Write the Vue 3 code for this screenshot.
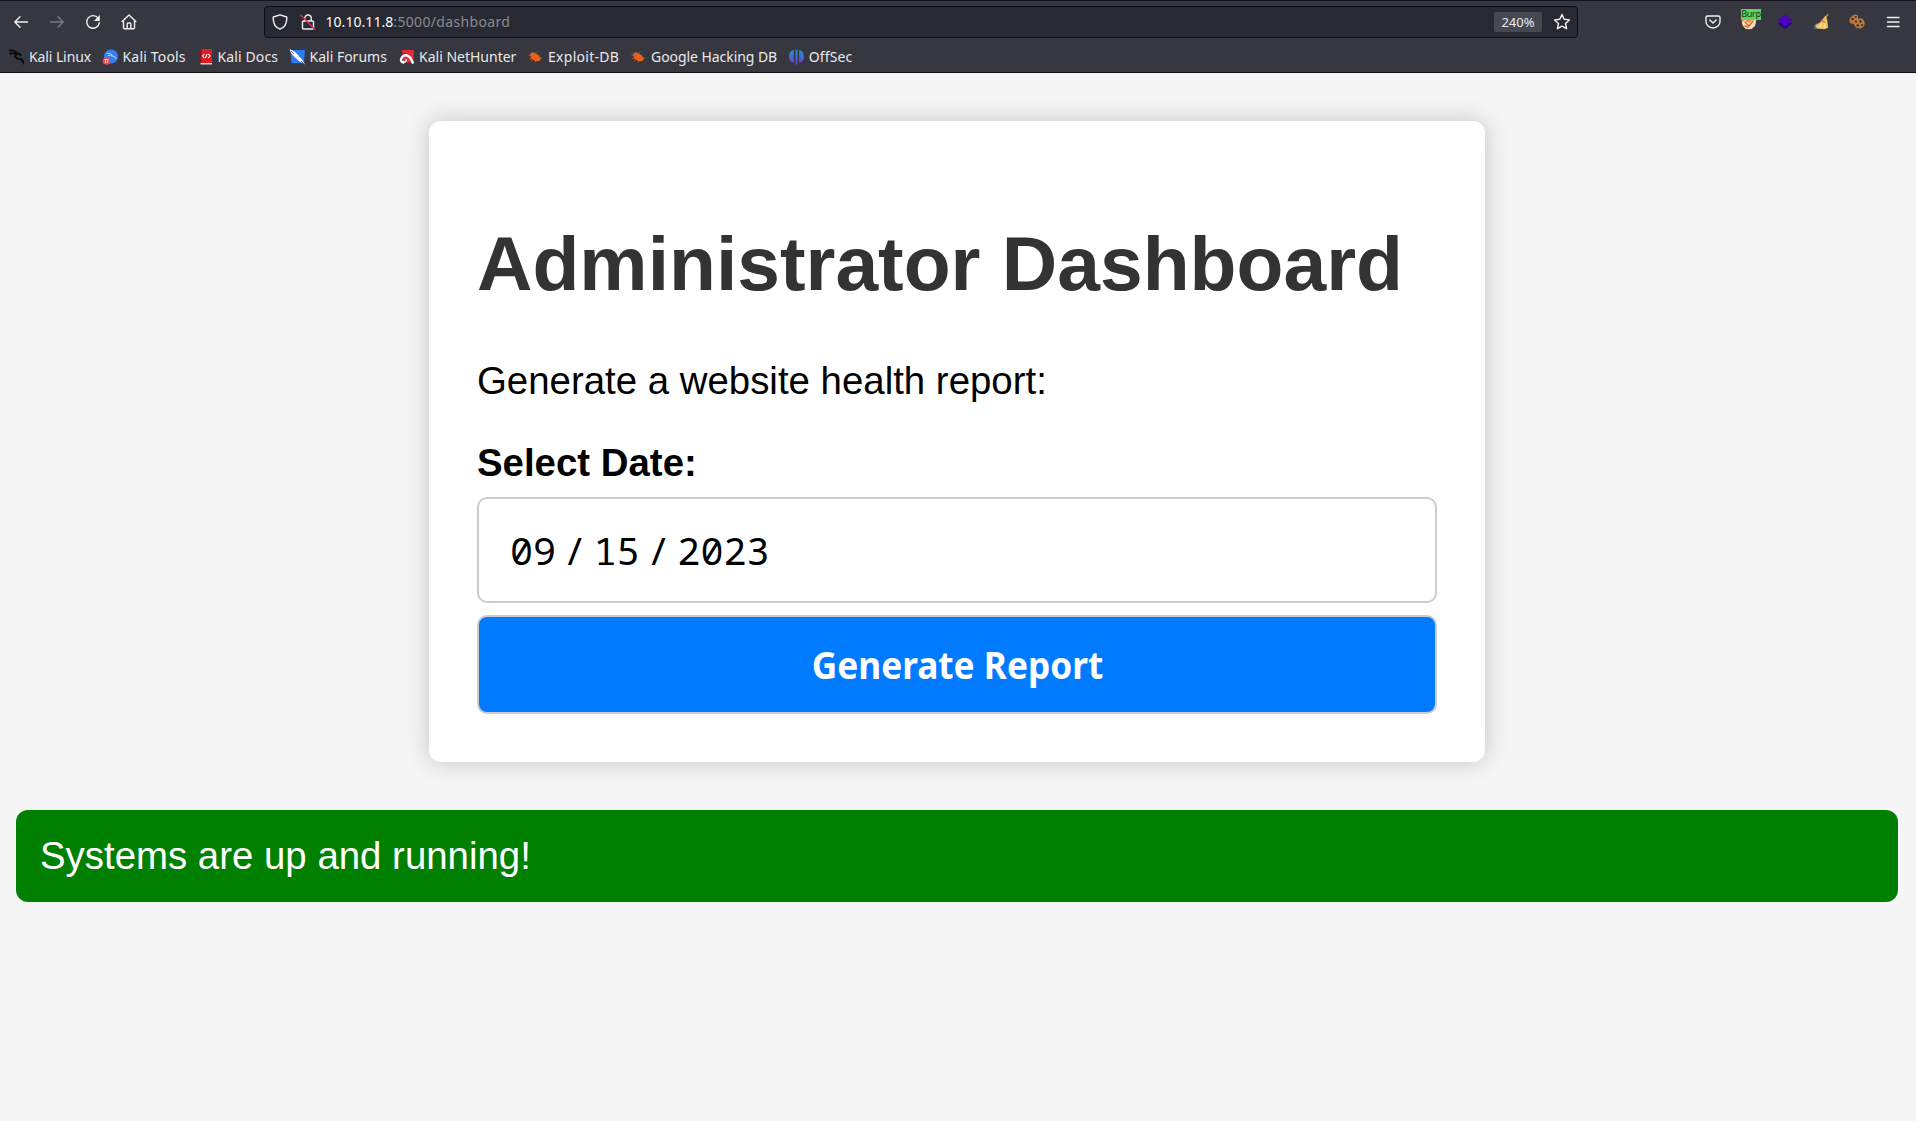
<script setup>
import { ref } from 'vue'

const bookmarks = [
  { label: 'Kali Linux', icon: 'linux', width: 93.5, spacing: -0.1 },
  { label: 'Kali Tools', icon: 'tools', width: 95, spacing: 0.18 },
  { label: 'Kali Docs', icon: 'docs', width: 92, spacing: 0.12 },
  { label: 'Kali Forums', icon: 'forums', width: 109.5, spacing: 0 },
  { label: 'Kali NetHunter', icon: 'nethunter', width: 129, spacing: 0 },
  { label: 'Exploit-DB', icon: 'bug', width: 103, spacing: 0.28 },
  { label: 'Google Hacking DB', icon: 'bug', width: 157.8, spacing: -0.06 },
  { label: 'OffSec', icon: 'offsec', width: 80, spacing: 0.12 },
]
const date = ref({ month: '09', day: '15', year: '2023' })
const status = ref('Systems are up and running!')
</script>

<template>
  <div class="browser">
    <header class="chrome">
      <div class="toolbar">
        <nav class="buttons">
          <button class="tool"><svg width="16" height="16" viewBox="0 0 16 16"><path d="M14.500 8H1.800M7 2.800L1.800 8l5.200 5.200" /></svg></button>
          <button class="tool dim"><svg width="16" height="16" viewBox="0 0 16 16"><path d="M1.500 8h12.700M9 2.800L14.200 8 9 13.200" /></svg></button>
          <button class="tool"><svg width="16" height="16" viewBox="0 0 16 16"><path d="M13 4A6.300 6.300 0 1 0 14.300 8.800" /><path class="solid" d="M14.800 1v6H9z" /></svg></button>
          <button class="tool"><svg width="16" height="16" viewBox="0 0 16 16"><path d="M1.200 7.500L8 1l6.800 6.500M2.500 6.500v7.300q0 1 1 1h9q1 0 1-1V6.500M6.200 14.500V10q0-1 1-1h1.600q1 0 1 1v4.500" /></svg></button>
        </nav>

        <div class="urlbar">
          <svg class="shield" width="16" height="16" viewBox="0 0 16 16"><path d="M8 .8L14.700 3c.5 5.500-1.300 10-6.700 12.200C2.600 13 .8 8.500 1.300 3z" /></svg>
          <svg class="lock" width="16" height="16" viewBox="0 0 16 16"><path d="M4.800 7V4.200a3.200 3.200 0 0 1 6.400 0V7M3.500 7h9q1 0 1 1v6q0 1-1 1h-9q-1 0-1-1V8q0-1 1-1z" /><path class="slash" d="M.8 1.200L15 15.500" /></svg>
          <span class="url"><span class="host">10.10.11.8</span><span class="path">:5000/dashboard</span></span>
          <span class="zoom">240%</span>
          <svg class="star" width="18" height="18" viewBox="0 0 18 18"><path d="M9 1.500l2.200 4.800 5.200.6-3.900 3.600 1.100 5.200L9 13.100l-4.600 2.600 1.100-5.200L1.600 6.900l5.200-.6z" /></svg>
        </div>

        <nav class="buttons extensions">
          <button class="tool"><svg width="16" height="16" viewBox="0 0 16 16"><path d="M2.500 2h11q1.500 0 1.500 1.500V7.500a7 6.500 0 0 1-14 0v-4Q1 2 2.500 2zM4.800 6L8 9l3.200-3" /></svg></button>
          <button class="tool burp">
            <svg width="18" height="18" viewBox="0 0 18 18"><path fill="#e98b3c" stroke="none" d="M1.500 5h15l-1 6-3 4.500-3.500 1-4-1.500L2 11z" /><path fill="#f4dfc8" stroke="none" d="M2 9l3-2 4 3 4-4 3 1-1 6-4 3-5 0-3-3z" /><path stroke="#d96c1c" stroke-width="1.500" d="M5 9l4 4 4-5M5 13l3 1" /></svg>
            <span class="badge">Burp</span>
          </button>
          <button class="tool"><svg width="16" height="16" viewBox="0 0 16 16"><path fill="#2d087c" stroke="none" d="M.5 9.500L8 5l7.500 4.500L8 15.500z" /><path fill="#4a04bb" stroke="none" d="M.5 6.500L8 .5l7.500 6L8 12.500z" /></svg></button>
          <button class="tool"><svg width="16" height="16" viewBox="0 0 16 16"><path fill="#637078" stroke="none" d="M4 9Q0 11 1.500 15h8L6 12z" /><path stroke="#c59129" d="M14.800.5L12.500 4" /><path fill="#f3c566" stroke="none" d="M12.500 1.500l1.800 5 .7 7.500-4 1.300-7-1-1.500-2.800L7.500 8z" /><path stroke="#e76d55" d="M8.500 6.500l3 1.500" /><path stroke="#fae29a" d="M8 10.500l-1 2M11.500 10.500v2" /></svg></button>
          <button class="tool"><svg width="16" height="16" viewBox="0 0 16 16"><path fill="#b87942" stroke="none" d="M3.500 1.500q3-2 5.500 0v3.500q3-1.500 5 .5 2.500 2.500 1.500 5-1 3.500-4.500 4-3 .5-5-2-1.500-2-1-3-4 1-4.500-1.500-.8-4 3-6.500z" /><g fill="#382c2b" stroke="none"><circle cx="3.600" cy="5" r="1.200" /><circle cx="6.800" cy="3" r=".9" /><circle cx="7" cy="7.500" r="1.100" /><circle cx="11.500" cy="7.500" r="1.200" /><circle cx="8.800" cy="11.500" r="1.200" /><circle cx="13" cy="11" r="1" /></g></svg></button>
          <button class="tool"><svg width="16" height="16" viewBox="0 0 16 16"><path d="M2.500 3.500h11.500M2.500 8h11.500M2.500 12.500h11.500" /></svg></button>
        </nav>
      </div>

      <div class="bookmarks">
        <a v-for="b in bookmarks" :key="b.label" class="bookmark" :style="{ width: b.width + 'px', letterSpacing: b.spacing + 'px' }">
          <svg width="16" height="16" viewBox="0 0 16 16">
            <g v-if="b.icon === 'linux'" fill="none" stroke="#08090b">
              <path stroke-width="1.600" d="M1 1.500q6-1 8.500 3.500M1.500 5q5-2 8 .5" />
              <path stroke-width="2.200" d="M7 4q4 0 6.500 2.500M8 5q-2 4 2 4.500 4 0 5.200 4" />
              <path d="M14.500 11l1.200 4.500M3.500 2.500L1.500 4" />
            </g>
            <g v-else-if="b.icon === 'tools'">
              <circle cx="9" cy="7.500" r="7" fill="#327ff2" />
              <path fill="none" stroke="#b9d6ff" stroke-width="1" d="M4.500 4.500q5-1 6 2.500 3 0 3.500 3M6 6.500q3-1 4.500 1" />
              <circle cx="4.500" cy="12" r="3.800" fill="#e74848" />
              <path stroke="#fff" stroke-width=".8" d="M2.500 10.500h4M3.500 10.500v3.500M5.500 10.500v3.500" />
            </g>
            <g v-else-if="b.icon === 'docs'">
              <path fill="#dc1e20" d="M3 0h12v14H3z" />
              <path fill="#920f2e" d="M3 0h1.500v14H3z" />
              <path fill="#d7d5d5" d="M3.500 14H15v1.500H3.500z" />
              <path fill="none" stroke="#fff" stroke-width="1.100" d="M7.300 5L5.500 7l1.800 2M11.200 5L13 7l-1.800 2M10 5L8.500 9" />
            </g>
            <g v-else-if="b.icon === 'forums'">
              <path fill="#297cf1" d="M1.500 1H16l-1 13H2.500z" />
              <path fill="#fff" d="M.5 0l5 2.500 4 4 3.500 4 3 5-6-3.500L6 8.500 2 4z" />
              <path stroke="#263047" stroke-width=".7" d="M2 2l3 3M12 12l3 3" />
            </g>
            <g v-else-if="b.icon === 'nethunter'" transform="translate(1 0) scale(.94 1)">
              <path fill="#e52c3d" d="M3 1h13l-1 12.500H5z" />
              <path fill="none" stroke="#fff" stroke-width="2.500" d="M5.500 13.500Q1 13 2.500 9.500 4.500 5.500 8.500 6.500q4 1 6.500 8" />
              <path fill="none" stroke="#fff" stroke-width="1.500" d="M4.500 13.500q4-.5 3-3.500" />
              <path fill="none" stroke="#2b2b32" stroke-width=".8" d="M3 5q2-1 4-.5" />
            </g>
            <g v-else-if="b.icon === 'bug'">
              <path fill="#ed6319" d="M3 4.500l3.500-1L11 6l3 3.500-1.500 2.500-4 .3L4 9z" />
              <path stroke="#d95c1d" stroke-width=".8" fill="none" d="M1.500 6l5 1M2.500 9.500h6M5 2.500l2 3M9 3v3M12 5.500l-2 3M4 12l5-3M8 13.500l2-3M15 9h-4" />
            </g>
            <g v-else>
              <defs><linearGradient id="offsec-fill" gradientUnits="userSpaceOnUse" x1="0" y1="0" x2="0" y2="16"><stop stop-color="#169bc1" /><stop offset="1" stop-color="#7138eb" /></linearGradient></defs>
              <path fill="url(#offsec-fill)" d="M5.800 .8v13Q1 12.500 1 7.800 1 2 5.800 .8zM7.500 .4h2v15.200h-2zM11.200.8Q16 2.300 16 7.800q0 4.700-4.800 6z" />
            </g>
          </svg>
          <span>{{ b.label }}</span>
        </a>
      </div>
    </header>

    <main class="page">
      <section class="card">
        <h1>Administrator Dashboard</h1>
        <p>Generate a website health report:</p>
        <label>Select Date:</label>
        <div class="date">
          <span>{{ date.month }}</span><span class="sep">/</span><span>{{ date.day }}</span><span class="sep">/</span><span>{{ date.year }}</span>
        </div>
        <button class="submit"><span>Generate Report</span></button>
      </section>
      <div class="status">{{ status }}</div>
    </main>
  </div>
</template>

<style>
body {
  margin: 0;
  background: #f5f5f5;
}
</style>

<style scoped>
.browser {
  width: 100%;
  height: 1121px;
  overflow: hidden;
  background: #f5f5f5;
}
.chrome {
  box-sizing: border-box;
  height: 73px;
  background: #373740;
  border-top: 1px solid #15131f;
  border-bottom: 1px solid #101015;
  color: #e9e9ea;
  font: 14px/20px "Noto Sans", sans-serif;
}
.toolbar {
  box-sizing: border-box;
  display: flex;
  align-items: center;
  height: 41px;
  padding: 0 5px 0 3px;
}
.buttons {
  display: flex;
  width: 261px;
}
.extensions {
  width: 216px;
  margin-left: auto;
}
.tool {
  position: relative;
  display: flex;
  align-items: center;
  justify-content: center;
  width: 36px;
  height: 34px;
  padding: 0;
  border: 0;
  background: none;
}
.chrome svg {
  flex: none;
}
.toolbar svg {
  fill: none;
  stroke: #f0f0f2;
  stroke-width: 1.4;
  stroke-linejoin: round;
  stroke-linecap: round;
}
.toolbar .dim svg {
  stroke: #7b7b82;
}
.toolbar .solid {
  fill: #f0f0f2;
  stroke: none;
}
.toolbar .slash {
  stroke: #e22850;
}
.badge {
  position: absolute;
  left: 10px;
  top: 4px;
  width: 20px;
  height: 11px;
  background: #5fd35f;
  color: #12351a;
  font: 9px/10px "Noto Sans", sans-serif;
  letter-spacing: -0.35px;
  text-align: center;
}
.urlbar {
  box-sizing: border-box;
  display: flex;
  align-items: center;
  width: 1314px;
  height: 32px;
  padding: 0 6px 0 7px;
  border: 1px solid #0d0d15;
  border-radius: 4px;
  background: #282a33;
}
.lock {
  margin-left: 12px;
}
.url {
  margin-left: 9.5px;
  padding-top: 1px;
  letter-spacing: 0.05px;
  white-space: nowrap;
}
.host {
  color: #fbfbfe;
}
.path {
  color: #898a91;
  letter-spacing: 0.34px;
}
.zoom {
  box-sizing: border-box;
  width: 48px;
  height: 20px;
  margin-left: auto;
  border-radius: 2px;
  background: #474952;
  font-size: 13px;
  line-height: 21px;
  text-align: center;
}
.star {
  margin-left: 11px;
}
.bookmarks {
  display: flex;
  height: 30px;
  padding-left: 8px;
}
.bookmark {
  display: flex;
  flex: none;
  align-items: center;
  gap: 5px;
  white-space: nowrap;
}
.page {
  padding: 48px 18px 0 16px;
  font: 38.4px/44px "Liberation Sans", Arial, sans-serif;
  color: #000;
}
.card {
  box-sizing: border-box;
  width: 1056px;
  height: 641px;
  margin: 0 auto;
  padding: 98px 48px 0;
  border-radius: 12px;
  background: #fff;
  box-shadow: 0 0 24px rgba(0, 0, 0, 0.2);
}
h1 {
  margin: 0;
  color: #333;
  font-size: 76.8px;
  line-height: 88px;
  white-space: nowrap;
}
p {
  margin: 52px 0 38px;
}
label {
  display: block;
  font-weight: bold;
}
.date {
  box-sizing: border-box;
  display: flex;
  align-items: center;
  height: 106px;
  margin-top: 12px;
  padding-left: 31px;
  border: 2px solid #ccc;
  border-radius: 10px;
  font-family: "Noto Sans Mono", "Noto Sans", monospace;
}
.sep {
  width: 37.6px;
  text-align: center;
}
.submit {
  display: block;
  width: 960px;
  height: 99px;
  margin-top: 12px;
  padding: 0;
  border: 2px solid #ccc;
  border-radius: 10px;
  background: #007bff;
  color: #fff;
  font: 700 37.6px/52px "Noto Sans", sans-serif;
}
.submit span {
  display: inline-block;
  transform: scaleX(0.937);
}
.status {
  height: 92px;
  box-sizing: border-box;
  margin-top: 48px;
  padding: 24px;
  border-radius: 12px;
  background: #008000;
  color: #fff;
}
</style>
